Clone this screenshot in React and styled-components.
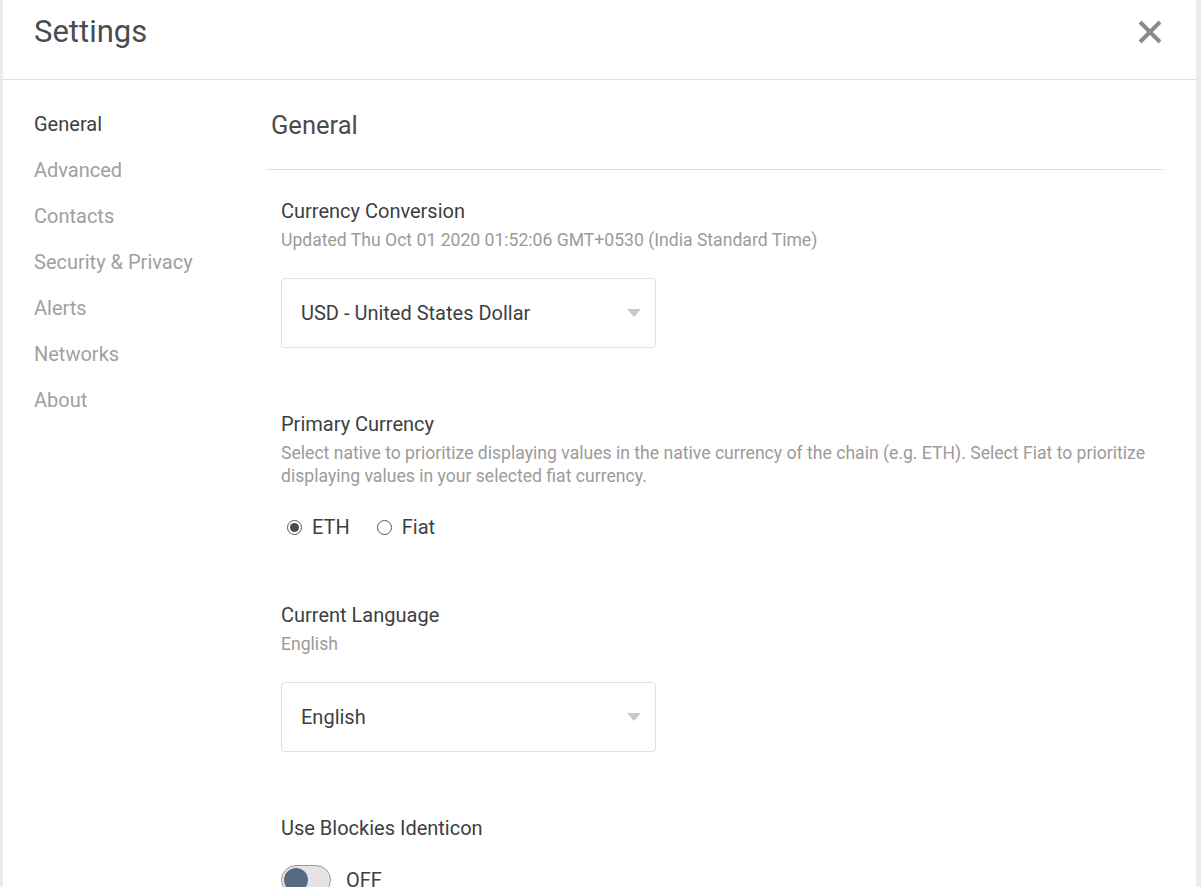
import React, { useState } from "react";
import styled, { createGlobalStyle } from "styled-components";

const GlobalStyle = createGlobalStyle`
  html, body {
    margin: 0;
    padding: 0;
    background: #ececec;
    font-family: Roboto, "Liberation Sans", sans-serif;
    overflow: hidden;
  }
`;

const Panel = styled.div`
  margin-left: 3px;
  width: 1193px;
  height: 887px;
  background: #fff;
  overflow: hidden;
`;

const Header = styled.div`
  height: 79px;
  border-bottom: 1px solid #dedede;
  display: flex;
  align-items: center;
  justify-content: space-between;
  padding: 0 34px 0 31px;
  box-sizing: content-box;
`;

const Title = styled.h1`
  margin: 0 0 16px;
  font-size: 31px;
  font-weight: 400;
  color: #4a4d50;
`;

const Close = styled.button`
  border: none;
  background: none;
  padding: 0;
  margin-bottom: 16px;
  width: 24px;
  height: 24px;
  display: flex;
  cursor: pointer;
`;

const Body = styled.div`
  display: flex;
`;

const Sidebar = styled.ul`
  list-style: none;
  margin: 0;
  padding: 21px 0 0 31px;
  width: 233px;
`;

const NavItem = styled.li`
  font-size: 20px;
  line-height: 46px;
  color: ${(p) => (p.$active ? "#3b3f43" : "#a0a0a0")};
  cursor: pointer;
`;

const Content = styled.div`
  flex: 1;
  margin-right: 33px;
`;

const Heading = styled.h2`
  margin: 0;
  padding: 21px 0 20px 4px;
  font-size: 25.5px;
  line-height: 48px;
  font-weight: 400;
  color: #4a4d50;
  border-bottom: 1px solid #dedede;
`;

const Sections = styled.div`
  padding: 29px 0 0 14px;
  display: flex;
  flex-direction: column;
  gap: 64px;
`;

const Section = styled.div`
  display: flex;
  flex-direction: column;
`;

const Label = styled.div`
  font-size: 20px;
  line-height: 24px;
  color: #3b3f43;
`;

const Sub = styled.div`
  margin-top: 6px;
  font-size: 17.6px;
  line-height: 23px;
  color: #9b9b9b;
`;

const Select = styled.div`
  margin-top: 26px;
  width: 375px;
  height: 70px;
  box-sizing: border-box;
  border: 1px solid #dde1e4;
  border-radius: 4px;
  display: flex;
  align-items: center;
  justify-content: space-between;
  padding: 0 14px 0 19px;
  font-size: 20px;
  color: #3b3f43;
`;

const Caret = styled.span`
  width: 0;
  height: 0;
  border-left: 7px solid transparent;
  border-right: 7px solid transparent;
  border-top: 8px solid #c8c8c8;
`;

const Radios = styled.div`
  margin-top: 27px;
  display: flex;
  gap: 27px;
  padding-left: 6px;
`;

const RadioLabel = styled.label`
  display: flex;
  align-items: center;
  gap: 10px;
  font-size: 20px;
  line-height: 24px;
  color: #3b3f43;
  cursor: pointer;
`;

const RadioDot = styled.span`
  width: 15px;
  height: 15px;
  box-sizing: border-box;
  border-radius: 50%;
  border: 1px solid #5a5a5a;
  display: flex;
  align-items: center;
  justify-content: center;
  &::after {
    content: "";
    width: 9px;
    height: 9px;
    border-radius: 50%;
    background: ${(p) => (p.$on ? "#4a4a4a" : "transparent")};
  }
`;

const ToggleRow = styled.div`
  margin-top: 25px;
  display: flex;
  align-items: center;
  gap: 15px;
  font-size: 20px;
  color: #3b3f43;
`;

const Track = styled.span`
  width: 50px;
  height: 30px;
  box-sizing: border-box;
  border-radius: 15px;
  border: 1px solid #9a9a9a;
  background: #e4e4e4;
  display: flex;
  align-items: center;
  padding: 2px;
  &::before {
    content: "";
    width: 24px;
    height: 24px;
    border-radius: 50%;
    background: #566b80;
  }
`;

const nav = [
  "General",
  "Advanced",
  "Contacts",
  "Security & Privacy",
  "Alerts",
  "Networks",
  "About",
];

export default function App() {
  const [currency, setCurrency] = useState("ETH");
  return (
    <>
      <GlobalStyle />
      <Panel>
        <Header>
          <Title>Settings</Title>
          <Close aria-label="close">
            <svg width="24" height="24" viewBox="0 0 24 24">
              <path
                d="M2 2 L22 22 M22 2 L2 22"
                stroke="#8a8a8a"
                strokeWidth="4"
              />
            </svg>
          </Close>
        </Header>
        <Body>
          <Sidebar>
            {nav.map((n, i) => (
              <NavItem key={n} $active={i === 0}>
                {n}
              </NavItem>
            ))}
          </Sidebar>
          <Content>
            <Heading>General</Heading>
            <Sections>
              <Section>
                <Label>Currency Conversion</Label>
                <Sub>
                  Updated Thu Oct 01 2020 01:52:06 GMT+0530 (India Standard
                  Time)
                </Sub>
                <Select>
                  USD - United States Dollar
                  <Caret />
                </Select>
              </Section>
              <Section>
                <Label>Primary Currency</Label>
                <Sub>
                  Select native to prioritize displaying values in the native
                  currency of the chain (e.g. ETH). Select Fiat to prioritize
                  displaying values in your selected fiat currency.
                </Sub>
                <Radios>
                  {["ETH", "Fiat"].map((c) => (
                    <RadioLabel key={c} onClick={() => setCurrency(c)}>
                      <RadioDot $on={currency === c} />
                      {c}
                    </RadioLabel>
                  ))}
                </Radios>
              </Section>
              <Section>
                <Label>Current Language</Label>
                <Sub>English</Sub>
                <Select>
                  English
                  <Caret />
                </Select>
              </Section>
              <Section>
                <Label>Use Blockies Identicon</Label>
                <ToggleRow>
                  <Track />
                  OFF
                </ToggleRow>
              </Section>
            </Sections>
          </Content>
        </Body>
      </Panel>
    </>
  );
}
